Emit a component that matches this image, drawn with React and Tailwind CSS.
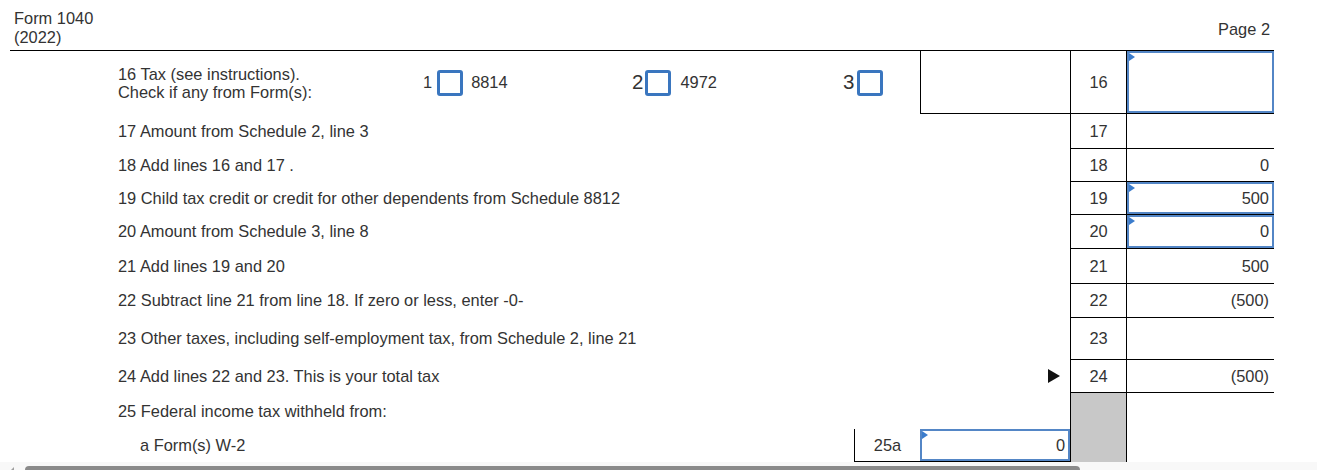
const rows = [
  { num: "17", label: "17 Amount from Schedule 2, line 3", h: "h-[35px]" },
  { num: "18", label: "18 Add lines 16 and 17 .", value: "0", h: "h-[33px]" },
  { num: "19", label: "19 Child tax credit or credit for other dependents from Schedule 8812", value: "500", input: true, h: "h-[33px]" },
  { num: "20", label: "20 Amount from Schedule 3, line 8", value: "0", input: true, h: "h-[34px]" },
  { num: "21", label: "21 Add lines 19 and 20", value: "500", h: "h-[35px]" },
  { num: "22", label: "22 Subtract line 21 from line 18. If zero or less, enter -0-", value: "(500)", h: "h-[34px]" },
  { num: "23", label: "23 Other taxes, including self-employment tax, from Schedule 2, line 21", h: "h-[42px]" },
  { num: "24", label: "24 Add lines 22 and 23. This is your total tax", value: "(500)", arrow: true, h: "h-[33px]" },
];

const Flag = () => (
  <span className="absolute top-0 left-0 w-0 h-0 border-y-[4px] border-y-transparent border-l-[6px] border-l-[#3b7ccc]" />
);

const InputBox = ({ value }) => (
  <div className="relative flex-1 h-full border-2 border-[#5386c6] flex items-center justify-end pr-[3px]">
    <Flag />
    {value}
  </div>
);

const CheckBox = () => (
  <span className="inline-block w-[26px] h-[26px] border-[3px] border-[#3a76bf] rounded-[3px]" />
);

const Row = ({ num, label, value, input, arrow, h }) => (
  <div className={`flex ${h}`}>
    <div className="flex-1 flex items-center pl-[108px] pb-[1px]">
      <span className="flex-1">{label}</span>
      {arrow && (
        <span className="mr-[10px] w-0 h-0 border-y-[7px] border-y-transparent border-l-[12px] border-l-[#111]" />
      )}
    </div>
    <div className="w-[57px] border-x border-b border-black flex items-center justify-center">
      {num}
    </div>
    <div className="w-[147px] border-b border-black flex items-center justify-end">
      {input ? <InputBox value={value} /> : <span className="pr-[5px]">{value}</span>}
    </div>
  </div>
);

export default function App() {
  return (
    <div className="h-[470px] w-[1317px] flex flex-col overflow-hidden bg-white text-[16.4px] text-[#333] font-['Liberation_Sans',Arial,sans-serif]">
      <div className="flex-1 overflow-hidden">
        <div className="flex justify-between h-[50px]">
          <div className="pl-[14px] pt-[9px] leading-[19px]">
            <div>Form 1040</div>
            <div>(2022)</div>
          </div>
          <div className="pr-[47px] pt-[17px]">Page 2</div>
        </div>

        <div className="ml-[10px] w-[1264px] border-t border-black">
          <div className="flex h-[63px]">
            <div className="flex-1 flex items-center pl-[108px]">
              <div className="w-[305px] leading-[18px]">
                <div>16 Tax (see instructions).</div>
                <div>Check if any from Form(s):</div>
              </div>
              <div className="w-[209px] flex items-center">
                <span>1</span>
                <span className="ml-[5px] flex"><CheckBox /></span>
                <span className="ml-[8px]">8814</span>
              </div>
              <div className="w-[211px] flex items-center">
                <span className="text-[20.5px]">2</span>
                <span className="ml-[2px] flex"><CheckBox /></span>
                <span className="ml-[9px]">4972</span>
              </div>
              <div className="w-[77px] flex items-center">
                <span className="text-[20.5px]">3</span>
                <span className="ml-[3px] flex"><CheckBox /></span>
              </div>
              <div className="w-[150px] h-full border-l border-b border-black" />
            </div>
            <div className="w-[57px] border-x border-b border-black flex items-center justify-center">
              16
            </div>
            <div className="w-[147px] border-b border-black flex">
              <InputBox value="" />
            </div>
          </div>

          {rows.map((r) => (
            <Row key={r.num} {...r} />
          ))}

          <div className="flex h-[36px]">
            <div className="flex-1 flex items-center pl-[108px]">
              25 Federal income tax withheld from:
            </div>
            <div className="w-[57px] border-x border-black bg-[#c8c8c8]" />
            <div className="w-[147px]" />
          </div>

          <div className="flex h-[33px]">
            <div className="flex-1 flex items-center pl-[130px]">
              <span className="flex-1">a Form(s) W-2</span>
              <div className="w-[66px] h-full border-l border-b border-black flex items-center justify-center">
                25a
              </div>
              <div className="w-[150px] h-full border-b border-black flex">
                <InputBox value="0" />
              </div>
            </div>
            <div className="w-[57px] border-x border-black bg-[#c8c8c8]" />
            <div className="w-[147px]" />
          </div>
        </div>
      </div>

      <div className="h-[8px] bg-[#f8f8f8] flex items-start relative">
        <span className="ml-[10px] mt-[5px] w-0 h-0 border-b-[4px] border-b-[#a0a0a0] border-l-[4px] border-l-transparent" />
        <div className="ml-[11px] mt-[4px] w-[1055px] h-[8px] rounded-[4px] bg-[#8a8a8a]" />
      </div>
    </div>
  );
}
